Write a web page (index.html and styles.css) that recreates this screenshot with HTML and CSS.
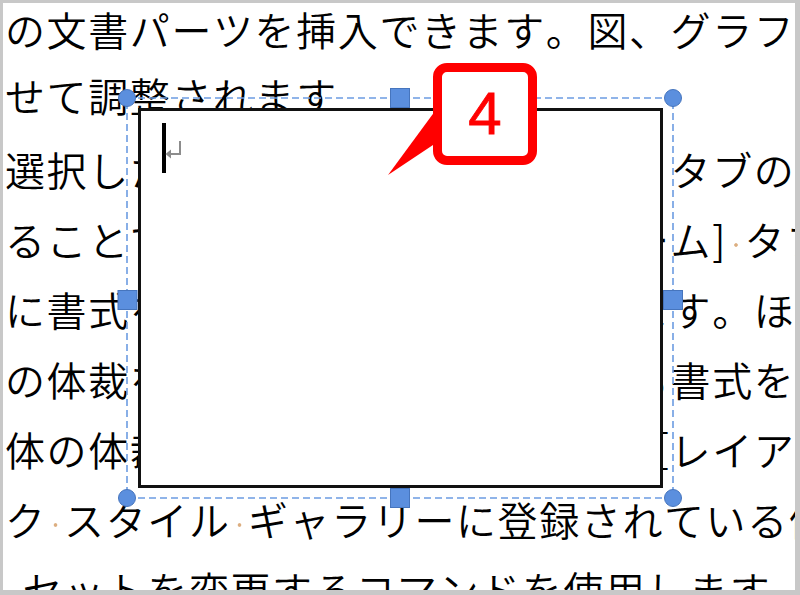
FILE: index.html
```html
<!DOCTYPE html>
<html lang="ja">
<head>
<meta charset="utf-8">
<title>文書</title>
<link rel="stylesheet" href="styles.css">
</head>
<body>
<div class="page">
  <div class="doc">
    <div class="line first">の文書パーツを挿入できます。図、グラフ、図表を作成すると</div>
    <div class="line second">せて調整されます</div>
    <div class="line">選択した文字列の書式は［ホーム］タブのクイック</div>
    <div class="line">ることで簡単に変更できます［ホーム]<span class="sp"></span>タブの</div>
    <div class="line">に書式を直接設定することもできます。ほとんど</div>
    <div class="line">の体裁を使用するか、直接指定する書式を使用するか</div>
    <div class="line">体の体裁を変更するには、ページ［レイアウト］</div>
    <div class="line">ク<span class="sp"></span>スタイル<span class="sp"></span>ギャラリーに登録されている体裁を変更</div>
    <div class="line"><span class="sp"></span>セットを変更するコマンドを使用します。</div>
  </div>

  <div class="shape">
    <div class="textbox">
      <span class="caret"></span>
      <svg class="pilcrow" width="19" height="22" viewBox="0 0 19 22">
        <path d="M15 1 V14 H4" fill="none" stroke="#8c8c8c" stroke-width="2"/>
        <path d="M0.5 14 L6 9.5 L6 18.5 Z" fill="#8c8c8c"/>
      </svg>
    </div>
    <svg class="frame" width="560" height="414" viewBox="0 0 560 414">
      <rect x="7" y="7" width="546" height="400" fill="none" stroke="#6c9ce2" stroke-width="1.6" stroke-dasharray="7 4"/>
      <g fill="#5b8fde" stroke="#4675bd" stroke-width="1">
        <circle cx="7" cy="7" r="8.5"/>
        <circle cx="553" cy="7" r="8.5"/>
        <circle cx="7" cy="407" r="8.5"/>
        <circle cx="553" cy="407" r="8.5"/>
        <rect x="270.5" y="-2.5" width="19" height="19"/>
        <rect x="-2" y="199.5" width="19" height="19"/>
        <rect x="543.5" y="199.5" width="19" height="19"/>
        <rect x="270.5" y="397.5" width="19" height="19"/>
      </g>
    </svg>
  </div>

  <div class="callout">
    <svg class="tail" width="70" height="80" viewBox="0 0 70 80">
      <path d="M56 5 L6 73 L60 37 Z" fill="#ff0000"/>
    </svg>
    <span class="num">4</span>
  </div>
</div>
</body>
</html>
```

FILE: styles.css
```css
html, body {
  margin: 0;
  padding: 0;
  background: #ffffff;
}

.page {
  position: relative;
  width: 800px;
  height: 595px;
  box-sizing: border-box;
  border-style: solid;
  border-color: #c8c8c8;
  border-width: 3px 5px 5px 3px;
  background: #ffffff;
  overflow: hidden;
}

.doc {
  margin-top: -9px;
  padding-left: 2px;
  font-family: "Noto Sans CJK JP", "Noto Sans CJK SC", sans-serif;
  font-size: 40px;
  font-weight: 350;
  letter-spacing: 1.6px;
  line-height: 70px;
  color: #000000;
  white-space: nowrap;
  font-kerning: none;
}

.line {
  height: 70px;
}

.line.first {
  height: 66px;
}

.line.second {
  height: 74px;
}

.sp {
  display: inline-block;
  width: 17.5px;
  height: 10px;
  vertical-align: middle;
  background: radial-gradient(circle at center, #dcae80 0, #dcae80 1.4px, rgba(255,255,255,0) 2.2px);
}

.shape {
  position: absolute;
  left: 117px;
  top: 88px;
  width: 560px;
  height: 414px;
  box-sizing: border-box;
  padding: 17px 17px 17px 18px;
}

.textbox {
  width: 100%;
  height: 100%;
  box-sizing: border-box;
  border: 3px solid #111111;
  background: #ffffff;
  padding: 12px 0 0 21px;
  display: flex;
  align-items: flex-start;
}

.caret {
  display: block;
  width: 4px;
  height: 50px;
  background: #000000;
}

.pilcrow {
  display: block;
  margin-top: 17px;
  margin-left: -1px;
}

.frame {
  position: absolute;
  left: 0;
  top: 0;
  overflow: visible;
}

.callout {
  position: absolute;
  left: 430px;
  top: 60px;
  width: 104px;
  height: 102px;
  box-sizing: border-box;
  border: 9px solid #ff0000;
  border-radius: 14px;
  background: #ffffff;
  display: flex;
  align-items: center;
  justify-content: center;
}

.tail {
  position: absolute;
  left: -60px;
  top: 30px;
}

.num {
  font-family: "Liberation Sans", Arial, sans-serif;
  font-size: 60px;
  line-height: 1;
  color: #ff0000;
  -webkit-text-stroke: 0.8px #ff0000;
}
```
